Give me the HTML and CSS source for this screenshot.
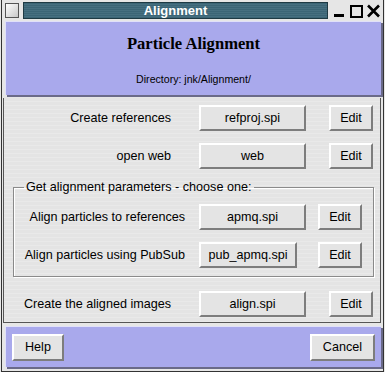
FILE: index.html
```html
<!DOCTYPE html>
<html>
<head>
<meta charset="utf-8">
<link rel="stylesheet" href="styles.css">
</head>
<body>
<div class="window">
  <div class="titlebar">
    <span class="menu-box"></span>
    <div class="title">Alignment</div>
    <div class="controls">
      <svg width="48" height="14" viewBox="0 0 48 14">
        <rect x="0" y="10" width="10" height="3" fill="#000"/>
        <rect x="17" y="2" width="11" height="11" fill="none" stroke="#000" stroke-width="2"/>
        <path d="M34 1.5 L45 12.5 M45 1.5 L34 12.5" stroke="#000" stroke-width="2.6" fill="none"/>
      </svg>
    </div>
  </div>
  <div class="header">
    <h1>Particle Alignment</h1>
    <p>Directory: jnk/Alignment/</p>
  </div>
  <div class="main">
    <div class="row top-row">
      <span class="label">Create references</span>
      <button class="btn wide">refproj.spi</button>
      <button class="btn edit">Edit</button>
    </div>
    <div class="row top-row">
      <span class="label">open web</span>
      <button class="btn wide">web</button>
      <button class="btn edit">Edit</button>
    </div>
    <fieldset class="group">
      <legend>Get alignment parameters - choose one:</legend>
      <div class="row group-row first">
        <span class="label">Align particles to references</span>
        <button class="btn wide">apmq.spi</button>
        <button class="btn edit">Edit</button>
      </div>
      <div class="row group-row">
        <span class="label">Align particles using PubSub</span>
        <button class="btn wide narrow">pub_apmq.spi</button>
        <button class="btn edit">Edit</button>
      </div>
    </fieldset>
    <div class="row top-row last">
      <span class="label">Create the aligned images</span>
      <button class="btn wide">align.spi</button>
      <button class="btn edit">Edit</button>
    </div>
  </div>
  <div class="footer">
    <button class="btn foot">Help</button>
    <button class="btn foot">Cancel</button>
  </div>
</div>
</body>
</html>
```
FILE: styles.css
```css
html, body {
  margin: 0;
  padding: 0;
  background: #e2e2e2;
}
.window {
  box-sizing: border-box;
  width: 385px;
  height: 372px;
  background: #e6e6e6;
  border-left: 1px solid #e8e8e8;
  border-right: 1px solid #e8e8e8;
  box-shadow: inset 1px 0 0 #333, inset -1px 0 0 #333, inset 0 -1px 0 #333;
  font-family: "Liberation Sans", Arial, sans-serif;
  font-size: 12.6px;
  color: #000;
  display: flex;
  flex-direction: column;
}
.titlebar {
  height: 21px;
  display: flex;
  align-items: flex-start;
  padding-top: 2px;
  box-sizing: border-box;
}
.menu-box {
  width: 12px;
  height: 13px;
  margin: 1px 0 0 4px;
  border: 1px solid #555;
  background: linear-gradient(135deg, #ffffff, #c8c8c8);
}
.title {
  flex: 1;
  margin-left: 4px;
  height: 15px;
  background: repeating-linear-gradient(180deg, #3b6576 0, #3b6576 1px, #466f80 1px, #466f80 2px);
  border: 1px solid #1e3a44;
  color: #fff;
  font-weight: bold;
  font-size: 13px;
  line-height: 15px;
  text-align: center;
}
.controls {
  width: 56px;
  padding: 2px 0 0 6px;
  box-sizing: border-box;
}
.controls svg { display: block; }
.header {
  margin: 0 3px 0 4px;
  height: 73px;
  background: #a9a9ec;
  border-top: 1px solid #e0e0f8;
  border-left: 1px solid #e0e0f8;
  box-shadow: 2px 2px 0 #6a6a88;
  text-align: center;
}
.header h1 {
  margin: 12px 0 0;
  font-family: "Liberation Serif", "Times New Roman", serif;
  font-size: 16.6px;
  font-weight: bold;
  line-height: 20px;
}
.header p {
  margin: 18px 0 0;
  font-size: 10.6px;
  line-height: 14px;
}
.main {
  margin: 3px 3px 0 2px;
  height: 225px;
  box-sizing: border-box;
  border-left: 1px solid #555;
  border-right: 1px solid #555;
  border-bottom: 1px solid #555;
  background: repeating-linear-gradient(180deg, #e4e4e4 0, #e4e4e4 3px, #e9e9e9 3px, #e9e9e9 4px);
  padding-top: 7px;
}
.row {
  display: flex;
  align-items: center;
}
.top-row {
  height: 26px;
  margin-bottom: 12px;
}
.top-row .label {
  width: 167px;
  text-align: right;
  margin-right: 28px;
}
.top-row .edit { margin-left: 23px; }
.top-row.last { margin-top: 14px; margin-bottom: 0; }
.btn {
  box-sizing: border-box;
  height: 26px;
  padding: 0;
  background: #e4e4e4;
  border-style: solid;
  border-width: 2px;
  border-color: #ffffff #7d7d7d #7d7d7d #ffffff;
  font-family: "Liberation Sans", Arial, sans-serif;
  font-size: 12.6px;
  color: #000;
}
.wide { width: 107px; }
.narrow { width: 98px; }
.edit { width: 44px; }
.group {
  margin: 4px 0 0 9px;
  width: 361px;
  min-width: 0;
  box-sizing: border-box;
  padding: 0 0 8px 0;
  border: 1px solid #8a8a8a;
  box-shadow: 1px 1px 0 #fff, inset 1px 1px 0 #fff;
}
.group legend {
  margin-left: 10px;
  padding: 0 3px 0 2px;
  font-size: 12.6px;
  line-height: 12px;
}
.group-row {
  height: 26px;
  margin-top: 12px;
}
.group-row.first { margin-top: 11px; }
.group-row .label {
  width: 171px;
  text-align: right;
  margin-right: 14px;
}
.group-row .edit { margin-left: 12px; }
.group-row .narrow + .edit { margin-left: 21px; }
.footer {
  margin: 3px 3px 0 4px;
  height: 40px;
  background: #a9a9ec;
  border-top: 1px solid #e0e0f8;
  border-left: 1px solid #e0e0f8;
  box-shadow: 2px 2px 0 #6a6a88;
  display: flex;
  justify-content: space-between;
  align-items: center;
  padding: 0 6px 0 6px;
}
.foot {
  height: 27px;
  padding: 0 11px;
}
```
